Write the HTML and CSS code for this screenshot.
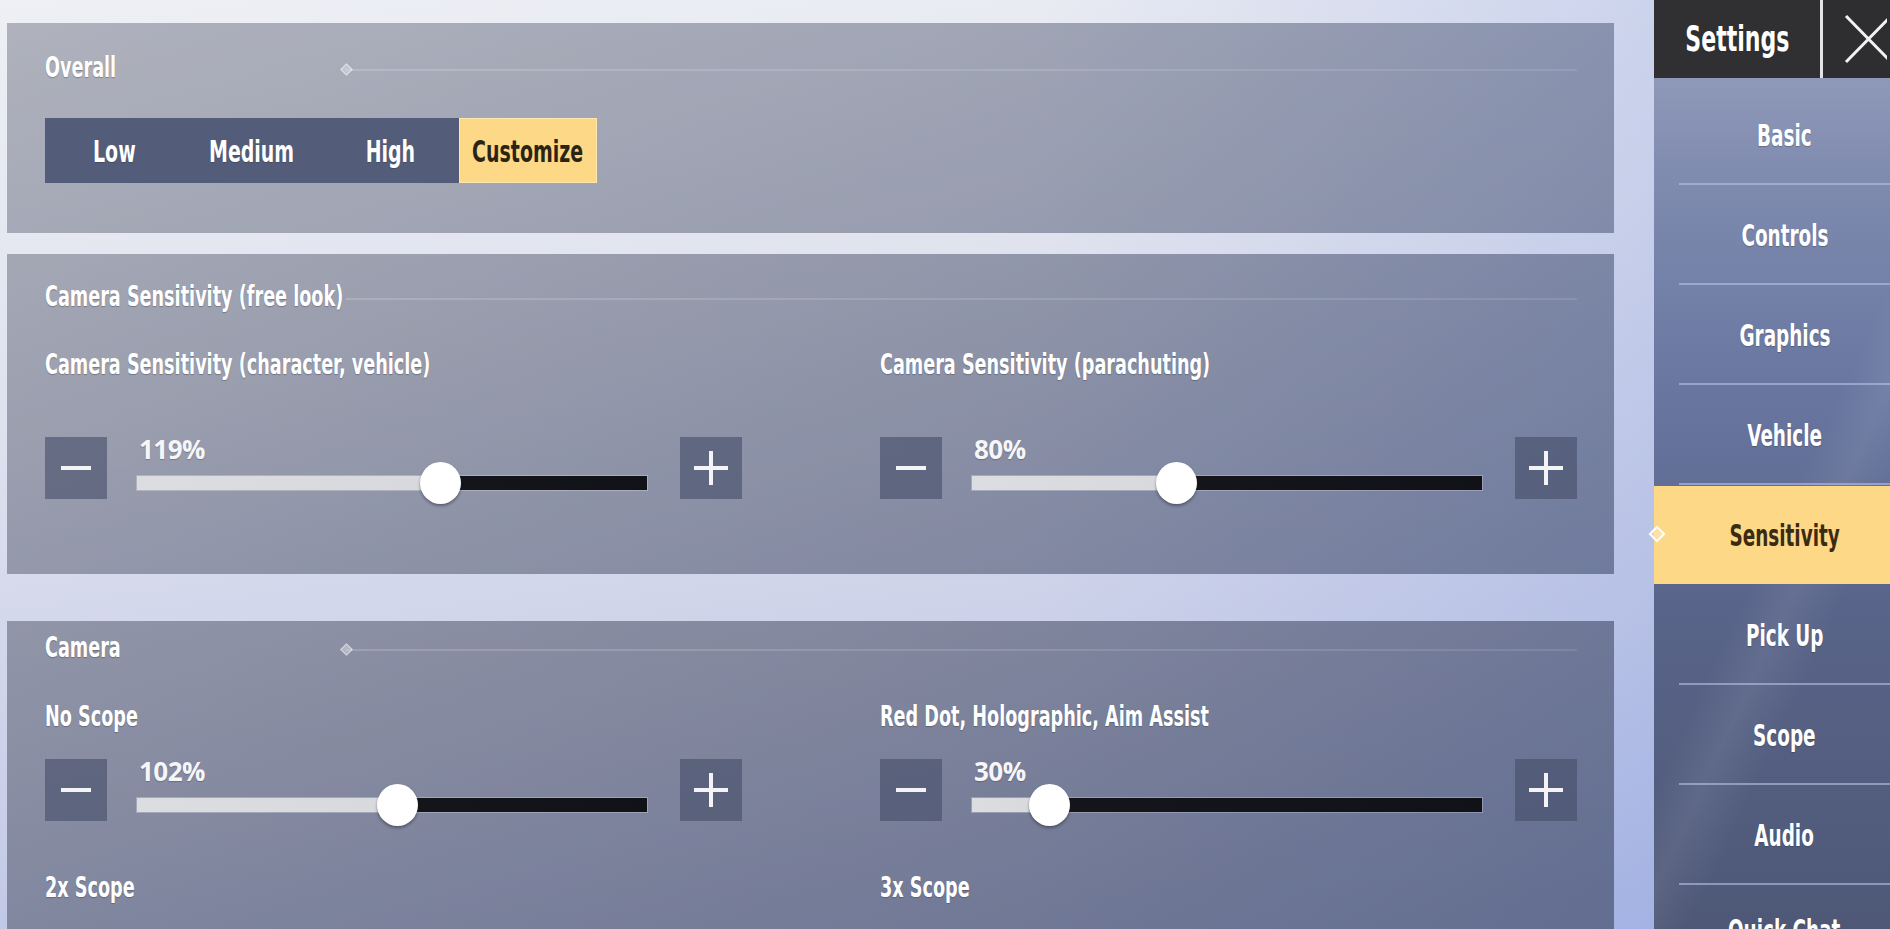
FILE: index.html
```html
<!DOCTYPE html>
<html lang="en">
<head>
<meta charset="utf-8">
<title>Settings - Sensitivity</title>
<link rel="stylesheet" href="styles.css">
</head>
<body>
<div class="screen">
  <main class="content">
    <section class="panel panel-overall">
      <div class="panel-head">
        <span class="lbl">Overall</span>
        <span class="head-rule"><i class="dia"></i></span>
      </div>
      <div class="seg">
        <div class="seg-item"><span class="lbl c">Low</span></div>
        <div class="seg-item"><span class="lbl c">Medium</span></div>
        <div class="seg-item"><span class="lbl c">High</span></div>
        <div class="seg-item active"><span class="lbl c">Customize</span></div>
      </div>
    </section>

    <section class="panel panel-free">
      <div class="panel-head">
        <span class="lbl">Camera Sensitivity (free look)</span>
        <span class="head-rule"></span>
      </div>
      <div class="rows">
        <div class="setting">
          <div class="setting-label"><span class="lbl">Camera Sensitivity (character, vehicle)</span></div>
          <div class="slider">
            <div class="step"><span class="minus"></span></div>
            <div class="track-wrap">
              <span class="pct">119%</span>
              <div class="track" style="--v:59.5%"><span class="knob"></span></div>
            </div>
            <div class="step"><span class="plus"></span></div>
          </div>
        </div>
        <div class="setting">
          <div class="setting-label"><span class="lbl">Camera Sensitivity (parachuting)</span></div>
          <div class="slider">
            <div class="step"><span class="minus"></span></div>
            <div class="track-wrap">
              <span class="pct">80%</span>
              <div class="track" style="--v:40%"><span class="knob"></span></div>
            </div>
            <div class="step"><span class="plus"></span></div>
          </div>
        </div>
      </div>
    </section>

    <section class="panel panel-camera">
      <div class="panel-head">
        <span class="lbl">Camera</span>
        <span class="head-rule"><i class="dia"></i></span>
      </div>
      <div class="rows">
        <div class="setting">
          <div class="setting-label"><span class="lbl">No Scope</span></div>
          <div class="slider">
            <div class="step"><span class="minus"></span></div>
            <div class="track-wrap">
              <span class="pct">102%</span>
              <div class="track" style="--v:51%"><span class="knob"></span></div>
            </div>
            <div class="step"><span class="plus"></span></div>
          </div>
        </div>
        <div class="setting">
          <div class="setting-label"><span class="lbl">Red Dot, Holographic, Aim Assist</span></div>
          <div class="slider">
            <div class="step"><span class="minus"></span></div>
            <div class="track-wrap">
              <span class="pct">30%</span>
              <div class="track" style="--v:15%"><span class="knob"></span></div>
            </div>
            <div class="step"><span class="plus"></span></div>
          </div>
        </div>
        <div class="setting">
          <div class="setting-label"><span class="lbl">2x Scope</span></div>
        </div>
        <div class="setting">
          <div class="setting-label"><span class="lbl">3x Scope</span></div>
        </div>
      </div>
    </section>
  </main>

  <aside class="sidebar">
    <header class="side-head">
      <div class="side-title"><span class="lbl c">Settings</span></div>
      <div class="side-close">
        <svg class="x-icon" viewBox="0 0 64 78" width="64" height="78" aria-hidden="true">
          <path d="M23 16 L68 62 M23 62 L68 16" stroke="#f2f2f2" stroke-width="3" fill="none"/>
        </svg>
      </div>
    </header>
    <nav class="side-nav">
      <div class="nav-item"><span class="lbl c">Basic</span></div>
      <div class="nav-item"><span class="lbl c">Controls</span></div>
      <div class="nav-item"><span class="lbl c">Graphics</span></div>
      <div class="nav-item"><span class="lbl c">Vehicle</span></div>
      <div class="nav-item active"><i class="marker"></i><span class="lbl c">Sensitivity</span></div>
      <div class="nav-item"><span class="lbl c">Pick Up</span></div>
      <div class="nav-item"><span class="lbl c">Scope</span></div>
      <div class="nav-item"><span class="lbl c">Audio</span></div>
      <div class="nav-item last"><span class="lbl c">Quick Chat</span></div>
    </nav>
  </aside>
</div>
</body>
</html>
```

FILE: styles.css
```css
* { box-sizing: border-box; }

html, body {
  margin: 0;
  padding: 0;
  width: 1890px;
  height: 929px;
  overflow: hidden;
}

body {
  font-family: "DejaVu Sans Condensed", "DejaVu Sans", sans-serif;
  font-stretch: condensed;
  color: #ffffff;
  background:
    linear-gradient(90deg, rgba(255,255,255,0) 55%, rgba(140,160,225,0.40) 100%),
    linear-gradient(172deg, #eef0f5 0%, #dfe2ee 35%, #c8cee8 70%, #aab8e4 100%);
}

.screen {
  display: flex;
  width: 1890px;
  height: 929px;
}

/* condensed game-like label text */
.lbl {
  display: inline-block;
  font-weight: bold;
  font-size: 28px;
  line-height: 30px;
  white-space: nowrap;
  transform: scaleX(0.7);
  transform-origin: left center;
  text-shadow: 0 1px 1px rgba(40,45,60,0.35);
}
.lbl.c { transform-origin: center center; }

/* ---------- main content ---------- */
.content {
  width: 1654px;
  flex: 0 0 1654px;
  height: 929px;
  padding: 23px 40px 0 7px;
  display: flex;
  flex-direction: column;
}

.panel {
  flex: 0 0 auto;
  padding: 0 37px 0 38px;
  background:
    linear-gradient(165deg, rgba(255,255,255,0.03) 0%, rgba(50,62,95,0.12) 100%),
    linear-gradient(90deg, rgba(84,88,106,0.42) 0%, rgba(80,86,110,0.44) 55%, rgba(72,84,116,0.46) 100%);
}

.panel-overall {
  height: 210px;
  padding-top: 30px;
}
.panel-free {
  height: 320px;
  margin-top: 21px;
  padding-top: 28px;
  background:
    linear-gradient(165deg, rgba(255,255,255,0.02) 0%, rgba(50,62,95,0.18) 100%),
    linear-gradient(90deg, rgba(84,88,106,0.46) 0%, rgba(80,86,110,0.50) 55%, rgba(70,82,116,0.52) 100%);
}
.panel-camera {
  flex: 1 1 auto;
  margin-top: 47px;
  padding-top: 12px;
  overflow: hidden;
  background:
    linear-gradient(165deg, rgba(255,255,255,0.0) 0%, rgba(50,60,90,0.20) 100%),
    linear-gradient(90deg, rgba(84,88,106,0.52) 0%, rgba(82,86,108,0.56) 55%, rgba(72,80,108,0.58) 100%);
}

.panel-head {
  display: grid;
  grid-template-columns: 301px 1fr;
  align-items: center;
  height: 30px;
}
.panel-head .lbl { grid-column: 1; grid-row: 1; }
.head-rule {
  grid-column: 2;
  grid-row: 1;
  position: relative;
  height: 2px;
  margin-top: 4px;
  background: linear-gradient(90deg, rgba(255,255,255,0.16), rgba(255,255,255,0.10));
}
.dia {
  position: absolute;
  left: -4px;
  top: -4px;
  width: 9px;
  height: 9px;
  transform: rotate(45deg);
  background: rgba(230,232,240,0.45);
  border: 1px solid rgba(255,255,255,0.5);
}

/* segmented buttons */
.seg {
  margin-top: 35px;
  width: 552px;
  height: 65px;
  display: grid;
  grid-template-columns: repeat(4, 138px);
  background: #535d7a;
}
.seg-item {
  display: flex;
  align-items: center;
  justify-content: center;
}
.seg-item .lbl { font-size: 31px; transform: scaleX(0.68); }
.seg-item.active {
  background: #fdd886;
  box-shadow: inset 0 0 0 1px rgba(255,240,200,0.6);
}
.seg-item.active .lbl { color: #2b2414; text-shadow: none; }

/* setting rows */
.rows {
  display: grid;
  grid-template-columns: 1fr 1fr;
  column-gap: 138px;
  margin-top: 38px;
}
.panel-camera .rows { margin-top: 39px; row-gap: 52px; }

.setting-label {
  height: 30px;
  margin-bottom: 57px;
}
.panel-camera .setting-label { margin-bottom: 27px; }

.slider {
  display: flex;
  height: 62px;
}
.step {
  flex: 0 0 62px;
  height: 62px;
  background: rgba(70,78,105,0.62);
  display: flex;
  align-items: center;
  justify-content: center;
}
.minus {
  width: 30px;
  height: 4px;
  background: #f4f4f6;
}
.plus {
  position: relative;
  width: 34px;
  height: 34px;
}
.plus::before, .plus::after {
  content: "";
  position: absolute;
  background: #f4f4f6;
}
.plus::before { left: 0; top: 15px; width: 34px; height: 4px; }
.plus::after { left: 15px; top: 0; width: 4px; height: 34px; }

.track-wrap {
  flex: 1 1 auto;
  margin: 0 33px 0 30px;
  display: flex;
  flex-direction: column;
}
.pct {
  font-family: "Open Sans", "Noto Sans", sans-serif;
  font-stretch: normal;
  font-weight: 700;
  font-size: 26px;
  line-height: 24px;
  height: 22px;
  padding-left: 2px;
  letter-spacing: -0.5px;
  color: #f6f6f8;
  text-shadow: 0 1px 1px rgba(40,45,60,0.3);
}
.track {
  position: relative;
  margin-top: 17px;
  height: 14px;
  background: linear-gradient(90deg, #dcdde0 0, #d8d9dc var(--v), #15161c var(--v), #111218 100%);
  box-shadow: 0 0 0 1px rgba(255,255,255,0.25);
}
.knob {
  position: absolute;
  left: var(--v);
  top: 50%;
  width: 41px;
  height: 42px;
  margin: -21px 0 0 -20px;
  border-radius: 50%;
  background: #ffffff;
  box-shadow: 0 2px 3px rgba(30,30,40,0.45);
}

/* ---------- sidebar ---------- */
.sidebar {
  flex: 0 0 236px;
  width: 236px;
  height: 929px;
  display: flex;
  flex-direction: column;
  background:
    linear-gradient(115deg, rgba(255,255,255,0) 55%, rgba(255,255,255,0.07) 62%, rgba(255,255,255,0) 70%),
    linear-gradient(180deg, #9aa2c0 0%, #7e8aae 20%, #6a78a2 40%, #59648a 65%, #4e5876 100%);
}
.side-head {
  display: flex;
  height: 78px;
  flex: 0 0 78px;
}
.side-title {
  width: 169px;
  background: #303032;
  display: flex;
  align-items: center;
  justify-content: center;
  border-right: 3px solid #e4e4e8;
}
.side-title .lbl { font-size: 35px; transform: scaleX(0.7); }
.side-close {
  flex: 1 1 auto;
  background: #2e2e30;
  overflow: hidden;
}
.x-icon { display: block; }

.side-nav {
  padding-top: 7px;
  display: flex;
  flex-direction: column;
}
.nav-item {
  position: relative;
  flex: 0 0 100px;
  height: 100px;
  display: flex;
  align-items: center;
  justify-content: center;
  padding-left: 25px;
  background-image: linear-gradient(rgba(180,195,230,0.6), rgba(180,195,230,0.6));
  background-repeat: no-repeat;
  background-size: calc(100% - 25px) 2px;
  background-position: 25px 100%;
}
.nav-item .lbl { font-size: 31px; transform: scaleX(0.66); }
.nav-item.active {
  background: #fdd886;
  flex: 0 0 98px;
  height: 98px;
  margin-top: 1px;
  margin-bottom: 1px;
}
.nav-item.last { flex-basis: 60px; height: 60px; align-items: flex-end; }
.nav-item.active .lbl { color: #3a2b12; text-shadow: none; }
.marker {
  position: absolute;
  left: -3px;
  top: 42px;
  width: 12px;
  height: 12px;
  transform: rotate(45deg);
  border: 2px solid rgba(255,255,255,0.95);
  background: rgba(255,240,210,0.4);
}
```
